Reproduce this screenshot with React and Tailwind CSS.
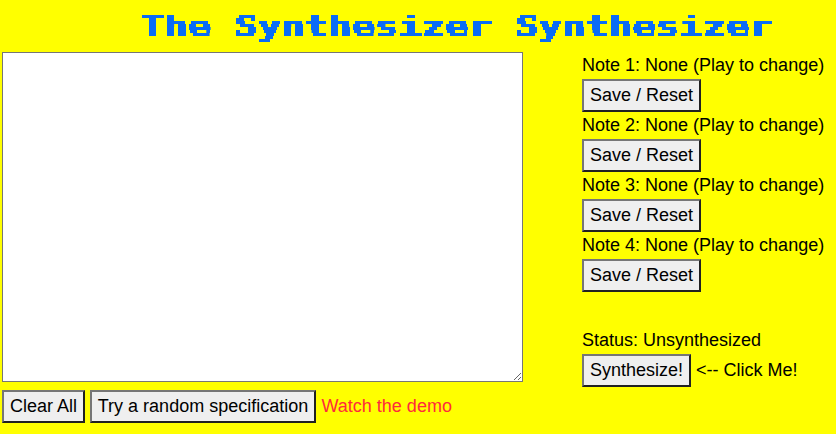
import React from 'react';

const NOTES = [1, 2, 3, 4];

function Button({ children, className = '' }) {
  return (
    <button
      className={`h-[33px] shrink-0 whitespace-nowrap border-2 border-t-[#767676] border-l-[#767676] border-r-[#212121] border-b-[#212121] bg-[#efefef] text-center text-[18px] leading-[27px] text-black ${className}`}
    >
      {children}
    </button>
  );
}

// Samples the centre of every 3x3 cell and grows it to fill the cell.
function PixelFilter() {
  return (
    <svg className="absolute h-0 w-0" aria-hidden="true">
      <filter id="pixels" filterUnits="userSpaceOnUse" primitiveUnits="userSpaceOnUse" x="0" y="15" width="660" height="27" colorInterpolationFilters="sRGB">
        <feFlood x="1" y="16" width="1" height="1" floodColor="#000" result="dot" />
        <feOffset in="dot" x="0" y="15" width="3" height="3" dx="0" dy="0" result="cell" />
        <feTile in="cell" x="0" y="15" width="660" height="27" result="grid" />
        <feComposite in="SourceGraphic" in2="grid" operator="in" result="samples" />
        <feMorphology in="samples" operator="dilate" radius="1" result="blocks" />
        <feComponentTransfer in="blocks">
          <feFuncA type="linear" slope="20" intercept="-11" />
        </feComponentTransfer>
      </filter>
    </svg>
  );
}

export default function App() {
  return (
    <div className="h-[434px] w-[836px] overflow-hidden bg-[#ffff00] font-['Liberation_Sans',Arial,sans-serif] text-[18px] leading-[30px] text-black">
      <PixelFilter />
      <header className="h-[50px] pl-[141px]">
        <div className="w-[660px] origin-left scale-x-[0.975]">
          <div className="h-[48px] w-[660px] pt-[6px] [filter:url(#pixels)]">
            <h1 className="w-max origin-left scale-x-[1.3748] whitespace-pre font-['DejaVu_Sans_Mono',monospace] text-[29px] leading-[40px] font-bold text-[#0a6cf5]">
              The Synthesizer Synthesizer
            </h1>
          </div>
        </div>
      </header>
      <main className="flex">
        <section className="w-[580px] pt-[2px] pl-[2px]">
          <textarea className="block h-[330px] w-[521px] resize border border-[#767676] bg-white p-[2px] outline-none" />
          <div className="mt-2 flex">
            <Button className="w-[83px]">Clear All</Button>
            <Button className="ml-[5px] w-[226px]">Try a random specification</Button>
            <a className="ml-[5.5px] leading-[32px] text-[#ff2a3c]">Watch the demo</a>
          </div>
        </section>
        <aside className="pl-[2px] whitespace-nowrap">
          {NOTES.map((n) => (
            <div key={n} className="h-[60px]">
              <div className="h-[29px]">Note {n}: None (Play to change)</div>
              <Button className="w-[119px]">Save / Reset</Button>
            </div>
          ))}
          <div className="pt-[35px]">
            <div className="h-[29px]">Status: Unsynthesized</div>
            <div className="flex">
              <Button className="w-[109px]">Synthesize!</Button>
              <span className="ml-[5px] leading-[32px]">&lt;-- Click Me!</span>
            </div>
          </div>
        </aside>
      </main>
    </div>
  );
}
